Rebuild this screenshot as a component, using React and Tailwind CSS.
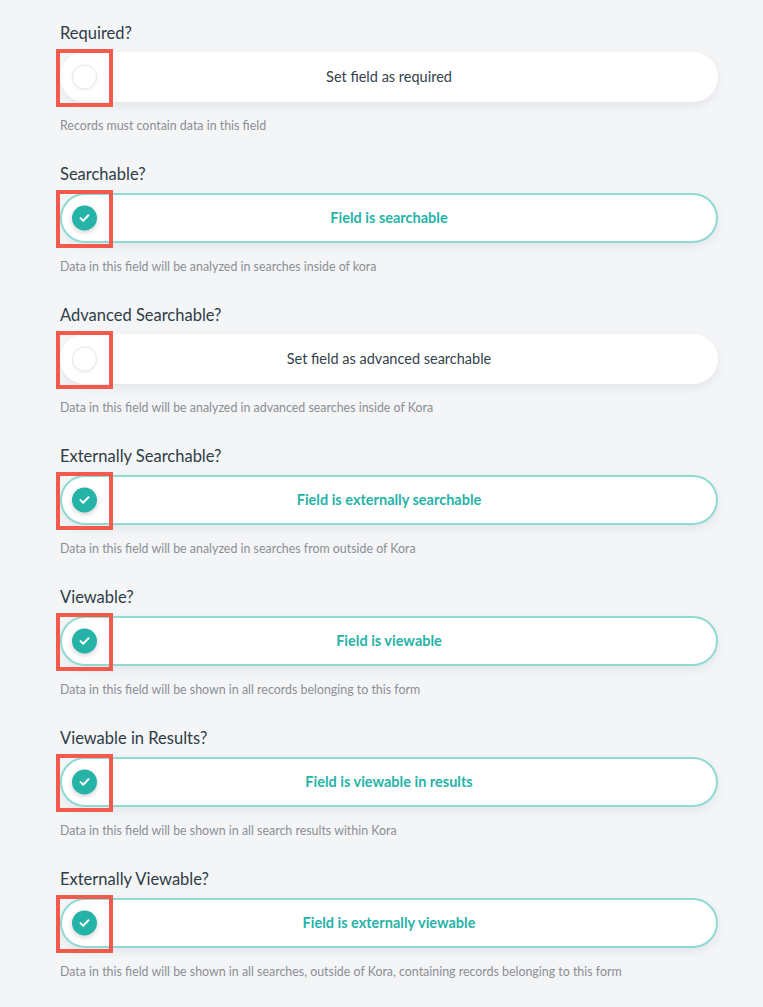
import React from "react";

const items = [
  { label: "Required?", on: false, text: "Set field as required", help: "Records must contain data in this field" },
  { label: "Searchable?", on: true, text: "Field is searchable", help: "Data in this field will be analyzed in searches inside of kora" },
  { label: "Advanced Searchable?", on: false, text: "Set field as advanced searchable", help: "Data in this field will be analyzed in advanced searches inside of Kora" },
  { label: "Externally Searchable?", on: true, text: "Field is externally searchable", help: "Data in this field will be analyzed in searches from outside of Kora" },
  { label: "Viewable?", on: true, text: "Field is viewable", help: "Data in this field will be shown in all records belonging to this form" },
  { label: "Viewable in Results?", on: true, text: "Field is viewable in results", help: "Data in this field will be shown in all search results within Kora" },
  { label: "Externally Viewable?", on: true, text: "Field is externally viewable", help: "Data in this field will be shown in all searches, outside of Kora, containing records belonging to this form" },
];

function Toggle({ on, text }) {
  return (
    <div
      className={
        "relative h-[50px] rounded-full bg-white flex items-center shadow-[0_4px_10px_rgba(20,40,60,0.07)] " +
        (on ? "border-2 border-[#8fdad4]" : "")
      }
    >
      <div className={"absolute top-1/2 -translate-y-1/2 " + (on ? "left-[10px]" : "left-[12px]")}>
        {on ? (
          <div className="w-[25px] h-[25px] rounded-full bg-[#25b3a8] flex items-center justify-center shadow-[0_2px_5px_rgba(0,0,0,0.18)]">
            <svg width="11" height="9" viewBox="0 0 11 9" fill="none">
              <path d="M1.5 4.6 L4.2 7.2 L9.5 1.8" stroke="white" strokeWidth="2" strokeLinecap="round" strokeLinejoin="round" />
            </svg>
          </div>
        ) : (
          <div className="w-[25px] h-[25px] rounded-full bg-white border border-[#e6e7e9] shadow-[0_1px_3px_rgba(0,0,0,0.06)]" />
        )}
      </div>
      <div
        className={
          "w-full text-center text-[14.5px] " +
          (on ? "text-[#27b3a8] font-bold" : "text-[#33414b]")
        }
      >
        {text}
      </div>
      <div className={"absolute border-4 border-[#f4594d] w-[57px] h-[58px] pointer-events-none " + (on ? "left-[-6px] top-[-5px]" : "left-[-4px] top-[-3px]")} />
    </div>
  );
}

export default function App() {
  return (
    <div className="min-h-[1007px] bg-[#f4f5f7] pl-[60px] pr-[45px] pt-[21px]" style={{ fontFamily: "Lato, 'Noto Sans', sans-serif" }}>
      {items.map((it, i) => (
        <div key={i} className="pb-[27px]">
          <div className="text-[16.5px] leading-[24px] text-[#2e3c46]">{it.label}</div>
          <div className="mt-[7px]">
            <Toggle on={it.on} text={it.text} />
          </div>
          <div className="mt-[15px] text-[12.4px] leading-[18px] text-[#8a8f95]">{it.help}</div>
        </div>
      ))}
    </div>
  );
}
